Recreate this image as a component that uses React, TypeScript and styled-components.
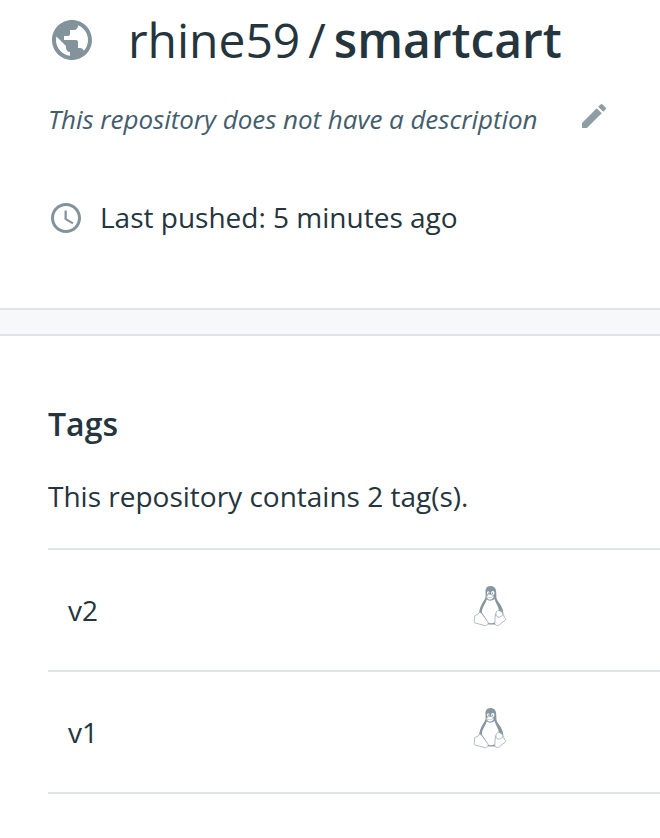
import React from 'react';
import styled, { createGlobalStyle } from 'styled-components';

const GlobalStyle = createGlobalStyle`
  * { box-sizing: border-box; }
  body { margin: 0; background: #fff; color: #25353d; font-family: "Open Sans", "Noto Sans", sans-serif; overflow: hidden; }
  h1, h2, p, ul { margin: 0; padding: 0; }
`;

const Page = styled.main`
  width: 660px;
  height: 838px;
  overflow: hidden;
  display: flex;
  flex-direction: column;
`;

const Header = styled.header`
  height: 308px;
  flex: none;
`;

const TitleRow = styled.div`
  display: flex;
  align-items: center;
  height: 80px;
  padding-left: 48px;
`;

const Title = styled.h1`
  display: flex;
  margin-left: 32px;
  font-size: 48px;
  line-height: 64px;
  font-weight: 400;
  letter-spacing: -0.03px;
  white-space: pre;
`;

const Slash = styled.span`
  margin: 0 8px;
`;

const RepoName = styled.span`
  font-weight: 600;
`;

const DescriptionRow = styled.div`
  display: flex;
  align-items: flex-start;
  justify-content: space-between;
  height: 78px;
  padding: 20px 50px 0 48px;
`;

const Description = styled.p`
  padding-top: 1px;
  font-size: 26px;
  line-height: 36px;
  font-style: italic;
  letter-spacing: -0.04px;
  color: #445d6c;
  white-space: nowrap;
`;

const PushedRow = styled.div`
  display: flex;
  align-items: center;
  height: 38px;
  margin-top: 40px;
  padding-left: 48px;
  gap: 16px;
`;

const BodyText = styled.p`
  font-size: 28px;
  line-height: 38px;
  white-space: nowrap;
`;

const Divider = styled.div`
  height: 28px;
  flex: none;
  background: #f6f8fa;
  border-top: 2px solid #e0e4e7;
  border-bottom: 2px solid #e0e4e7;
`;

const TagsSection = styled.section`
  padding: 66px 0 0 48px;
`;

const TagsHeading = styled.h2`
  font-size: 32px;
  line-height: 44px;
  font-weight: 600;
`;

const TagsSummary = styled.div`
  height: 102px;
  padding-top: 31px;
`;

const TagList = styled.ul`
  list-style: none;
  border-top: 2px solid #e0e4e7;
`;

const TagRow = styled.li`
  display: grid;
  grid-template-columns: 402px 1fr;
  height: 122px;
  padding-left: 20px;
  border-bottom: 2px solid #e0e4e7;
`;

const TagName = styled.span`
  padding-top: 41px;
  font-size: 28px;
  line-height: 38px;
`;

const OsCell = styled.span`
  padding-top: 32px;
`;

const Icon = styled.svg`
  display: block;
  flex: none;
`;

const ClockIcon = styled(Icon)`
  margin-top: 2px;
`;

const Globe = () => (
  <Icon width="48" height="48" viewBox="0 0 24 24" fill="#82939b">
    <path d="M12 2C6.48 2 2 6.48 2 12s4.48 10 10 10 10-4.48 10-10S17.52 2 12 2zm-1 17.93c-3.95-.49-7-3.85-7-7.93 0-.62.08-1.21.21-1.79L9 15v1c0 1.1.9 2 2 2v1.93zm6.9-2.54c-.26-.81-1-1.39-1.9-1.39h-1v-3c0-.55-.45-1-1-1H8v-2h2c.55 0 1-.45 1-1V7h2c1.1 0 2-.9 2-2v-.41c2.93 1.19 5 4.06 5 7.41 0 2.08-.8 3.97-2.1 5.39z" />
  </Icon>
);

const Pencil = () => (
  <Icon width="32" height="32" viewBox="0 0 24 24" fill="#8f9ea6">
    <path d="M3 17.25V21h3.75L17.81 9.94l-3.75-3.75L3 17.25zM20.71 7.04a1 1 0 0 0 0-1.41l-2.34-2.34a1 1 0 0 0-1.41 0l-1.83 1.83 3.75 3.75 1.83-1.83z" />
  </Icon>
);

const Clock = () => (
  <ClockIcon width="36" height="36" viewBox="0 0 24 24" fill="#82939b">
    <path d="M11.99 2C6.47 2 2 6.48 2 12s4.47 10 9.99 10C17.52 22 22 17.52 22 12S17.52 2 11.99 2zM12 20c-4.42 0-8-3.58-8-8s3.58-8 8-8 8 3.58 8 8-3.58 8-8 8zm.5-13H11v6l5.25 3.15.75-1.23-4.5-2.67z" />
  </ClockIcon>
);

const Penguin = () => (
  <Icon width="40" height="48" viewBox="0 0 40 48">
    <path fill="#8797a0" d="M20.5 4c-3.8 0-5.2 2.8-5 6.2.2 4.2.4 5.4-1.7 8.6-3 4.4-4.800 8.700-4.800 14.200l5 3 4.500 6.400h8L33 34c1.300-5-1.600-10.500-5-14.700-2-2.700-1.500-5.100-1.800-9.300C26 6.200 24.200 4 20.500 4z" />
    <path fill="#fff" d="M16.800 17.600c1.700 1.500 5.300 1.400 7.800-.6.600 3.500 4.200 7.400 4.500 12.500l-3.800 3.200-.2 7.300c-2.100 1.600-4.900 1.600-6.900.7l-3.600-6.200-2.800-4c.2-4.800 3.700-8.600 5-12.900z" />
    <ellipse cx="18.200" cy="11" rx="1.250" ry="1.800" fill="#fff" />
    <ellipse cx="22.800" cy="11" rx="1.700" ry="1.900" fill="#fff" />
    <circle cx="18.500" cy="11.200" r=".65" fill="#8797a0" />
    <circle cx="22.500" cy="11.200" r=".7" fill="#8797a0" />
    <path fill="#fff" stroke="#a2afb5" strokeWidth=".6" d="M16.500 14.300c1.800-2.400 4.500-2.200 7.200-.4.600 2.200-2 3.800-4 3.900-1.600 0-3.400-1.600-3.200-3.500z" />
    <path fill="none" stroke="#a2afb5" strokeWidth=".6" d="M17 14.900c2.200 1.300 4.300.8 6.400-.5" />
    <g fill="#fff" stroke="#9ca9b0" strokeWidth=".8" strokeLinejoin="round">
      <path d="M9.300 30.500c1.700-.3 2.700 1 3.700 2.700l4.700 6.400c1.200 2.200-.3 4.300-3.100 4-3.300-.8-5.900-2-9.300-2.500-1.700-.5-1-2.200-.8-4.100l.2-3.200c1.500-1.200 3.300-.8 4.600-3.300z" />
      <path d="M26 31c.2-2 1.900-2.900 3.500-2.300 1.500.5 3.200 1.700 3.500 3.500 1.200.8.600 2.800 2.500 4.300.8 1.300-.8 2.200-2.500 3.300l-3.700 3.100c-2.500 1.300-4.700.3-4.500-2.400.5-3.100-.2-7.500 1.200-9.500z" />
      <path fill="none" d="M26 31.800c0 2.500 1.200 3.700 3.500 3.200 2-.4 3.100-1.400 3.500-2.800" />
    </g>
  </Icon>
);

const App = () => (
  <>
    <GlobalStyle />
    <Page>
      <Header>
        <TitleRow>
          <Globe />
          <Title>
            <span>rhine59</span>
            <Slash>/</Slash>
            <RepoName>smartcart</RepoName>
          </Title>
        </TitleRow>
        <DescriptionRow>
          <Description>This repository does not have a description</Description>
          <Pencil />
        </DescriptionRow>
        <PushedRow>
          <Clock />
          <BodyText>Last pushed: 5 minutes ago</BodyText>
        </PushedRow>
      </Header>
      <Divider />
      <TagsSection>
        <TagsHeading>Tags</TagsHeading>
        <TagsSummary>
          <BodyText>This repository contains 2 tag(s).</BodyText>
        </TagsSummary>
        <TagList>
          {['v2', 'v1'].map((tag) => (
            <TagRow key={tag}>
              <TagName>{tag}</TagName>
              <OsCell><Penguin /></OsCell>
            </TagRow>
          ))}
        </TagList>
      </TagsSection>
    </Page>
  </>
);

export default App;
